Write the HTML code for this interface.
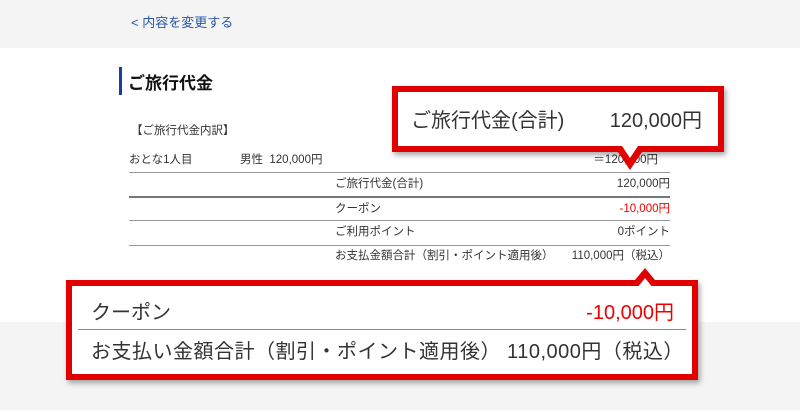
<!DOCTYPE html>
<html><head><meta charset="utf-8"><style>
*{margin:0;padding:0;box-sizing:border-box}
body{width:800px;height:410px;position:relative;overflow:hidden;background:#fff;font-family:"Liberation Sans","Noto Sans CJK JP",sans-serif;color:#333}
.a{position:absolute;white-space:nowrap}
.t{font-size:11.5px;line-height:12px}
.ln{position:absolute;left:129px;width:541px;height:1px;background:#999}
.box{position:absolute;border:6px solid #e00000;background:#fff;box-shadow:2px 3px 5px rgba(0,0,0,.35)}
</style></head><body>
<div class="a" style="left:0;top:0;width:800px;height:48px;background:#f4f4f4"></div>
<div class="a" style="left:0;top:322px;width:800px;height:88px;background:#f4f4f4"></div>
<div class="a" style="left:131px;top:12px;font-size:13px;color:#2a57a8">&lt; 内容を変更する</div>
<div class="a" style="left:119px;top:67px;width:3px;height:28px;background:#1a3f9a"></div>
<div class="a" style="left:128px;top:69px;font-size:17px;font-weight:bold;color:#111">ご旅行代金</div>
<div class="a t" style="left:131px;top:125px">【ご旅行代金内訳】</div>
<div class="a t" style="left:129px;top:154px">おとな1人目</div>
<div class="a t" style="left:240px;top:154px">男性&nbsp;&nbsp;120,000円</div>
<div class="a t" style="right:142px;top:154px">＝120,000円</div>
<div class="ln" style="top:172px"></div>
<div class="a t" style="left:335px;top:178px">ご旅行代金(合計)</div>
<div class="a t" style="right:130px;top:178px">120,000円</div>
<div class="ln" style="top:196px;height:2px;background:#777"></div>
<div class="a t" style="left:335px;top:203px">クーポン</div>
<div class="a t" style="right:130px;top:203px;color:#e00">-10,000円</div>
<div class="ln" style="top:220px"></div>
<div class="a t" style="left:335px;top:226px">ご利用ポイント</div>
<div class="a t" style="right:130px;top:226px">0ポイント</div>
<div class="ln" style="top:245px"></div>
<div class="a t" style="left:335px;top:250px">お支払金額合計（割引・ポイント適用後）</div>
<div class="a t" style="right:130px;top:250px">110,000円（税込）</div>

<div class="box" style="left:392px;top:86px;width:332px;height:66px">
<div class="a" style="left:13px;top:18px;font-size:20px;line-height:22px">ご旅行代金(合計)</div>
<div class="a" style="right:16px;top:18px;font-size:20px;line-height:22px">120,000円</div>
</div>
<svg class="a" style="left:612px;top:146px" width="36" height="28"><polygon points="2,0 34,0 18,24" fill="#e00000"/><polygon points="10,0 26,0 18,12" fill="#fff"/></svg>

<div class="box" style="left:66px;top:280px;width:632px;height:100px">
<div class="a" style="left:19px;top:15px;font-size:20px;line-height:24px">クーポン</div>
<div class="a" style="right:18px;top:15px;font-size:20px;line-height:24px;color:#e00">-10,000円</div>
<div class="a" style="left:6px;top:43px;width:608px;height:1px;background:#888"></div>
<div class="a" style="left:19px;top:54px;font-size:20px;line-height:24px;letter-spacing:0.5px">お支払い金額合計（割引・ポイント適用後） 110,000円（税込）</div>
</div>
<svg class="a" style="left:628px;top:266px" width="34" height="22"><polygon points="2,20 17,2 32,20" fill="#e00000"/><polygon points="9,22 17,12 25,22" fill="#fff"/></svg>
</body></html>
